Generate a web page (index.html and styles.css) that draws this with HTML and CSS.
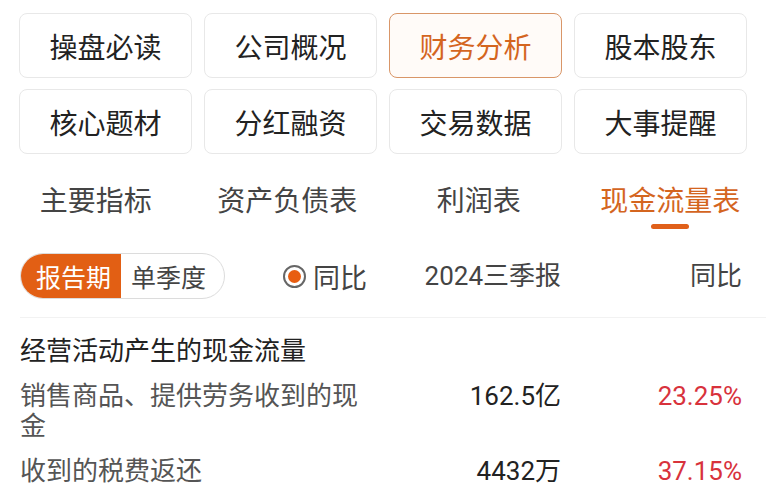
FILE: index.html
```html
<!DOCTYPE html>
<html>
    <head>
        <title>现金流量表</title>
        <link rel="stylesheet" href="styles.css">
    </head>
    <body>
        <div class="menu">
            <div class="menu-item">操盘必读</div>
            <div class="menu-item">公司概况</div>
            <div class="menu-item active">财务分析</div>
            <div class="menu-item">股本股东</div>
            <div class="menu-item">核心题材</div>
            <div class="menu-item">分红融资</div>
            <div class="menu-item">交易数据</div>
            <div class="menu-item">大事提醒</div>
        </div>

        <div class="tabs">
            <div class="tab">主要指标</div>
            <div class="tab">资产负债表</div>
            <div class="tab">利润表</div>
            <div class="tab active">现金流量表</div>
        </div>

        <div class="table-head">
            <div class="controls">
                <div class="period">
                    <span class="period-item on">报告期</span>
                    <span class="period-item">单季度</span>
                </div>
                <label class="radio">
                    <span class="radio-dot"></span>同比
                </label>
            </div>
            <div class="num head-text">2024三季报</div>
            <div class="num head-text">同比</div>
        </div>

        <div class="rows">
            <div class="row">
                <div class="name title">经营活动产生的现金流量</div>
                <div class="num"></div>
                <div class="num"></div>
            </div>
            <div class="row">
                <div class="name">销售商品、提供劳务收到的现金</div>
                <div class="num">162.5亿</div>
                <div class="num up">23.25%</div>
            </div>
            <div class="row">
                <div class="name">收到的税费返还</div>
                <div class="num">4432万</div>
                <div class="num up">37.15%</div>
            </div>
        </div>
    </body>
</html>
```

FILE: styles.css
```css
body {
  margin: 0;
  padding: 0;
  background: #fff;
  font-family: Roboto, "Noto Sans CJK SC", sans-serif;
  color: #222;
  overflow: hidden;
}

.menu {
  display: grid;
  grid-template-columns: repeat(4, 1fr);
  column-gap: 12px;
  row-gap: 11px;
  padding: 13px 19px 0;
}

.menu-item {
  height: 65px;
  box-sizing: border-box;
  border: 1px solid #e8e8e8;
  border-radius: 8px;
  display: flex;
  align-items: center;
  justify-content: center;
  font-size: 28px;
  color: #222;
}

.menu-item.active {
  border-color: #d99668;
  background: #fffbf8;
  color: #d4651f;
}

.tabs {
  display: flex;
  margin-top: 28px;
}

.tab {
  flex: 1;
  text-align: center;
  font-size: 28px;
  line-height: 40px;
  color: #444;
  padding-bottom: 10px;
}

.tab.active {
  color: #d4651f;
  position: relative;
}

.tab.active::after {
  content: "";
  position: absolute;
  left: 50%;
  bottom: 3px;
  width: 38px;
  height: 5px;
  margin-left: -19px;
  border-radius: 3px;
  background: #e0601a;
}

.table-head,
.row {
  display: grid;
  grid-template-columns: 1fr 180px 181px;
  padding: 0 24px 0 20px;
}

.table-head {
  margin-top: 21px;
  align-items: center;
  padding-bottom: 18px;
  border-bottom: 1px solid #f2f2f2;
  margin-left: 20px;
  padding-left: 0;
}

.controls {
  display: flex;
  align-items: center;
}

.period {
  display: flex;
  height: 46px;
  box-sizing: border-box;
  border: 1px solid #dcdcdc;
  border-radius: 23px;
  overflow: hidden;
}

.period-item {
  display: flex;
  align-items: center;
  font-size: 25px;
  color: #444;
  padding: 0 18px 0 10px;
}

.period-item.on {
  background: #e25f14;
  color: #fff;
  padding: 0 10px 0 16px;
  margin: -1px 0 -1px -1px;
}

.radio {
  display: flex;
  align-items: center;
  margin-left: 58px;
  font-size: 27px;
  color: #444;
}

.radio-dot {
  width: 23px;
  height: 23px;
  box-sizing: border-box;
  border: 2px solid #666;
  border-radius: 50%;
  margin-right: 7px;
  display: flex;
  align-items: center;
  justify-content: center;
}

.radio-dot::after {
  content: "";
  width: 13px;
  height: 13px;
  border-radius: 50%;
  background: #e85d10;
}

.num {
  text-align: right;
  font-size: 26px;
  line-height: 30px;
  color: #222;
}

.head-text {
  color: #444;
}

.rows {
  padding-top: 10px;
}

.row {
  padding-top: 8px;
  padding-bottom: 7px;
  align-items: start;
}

.name {
  font-size: 26px;
  line-height: 30px;
  color: #555;
  padding-right: 20px;
}

.name.title {
  color: #222;
}

.up {
  color: #d8323c;
}
```
